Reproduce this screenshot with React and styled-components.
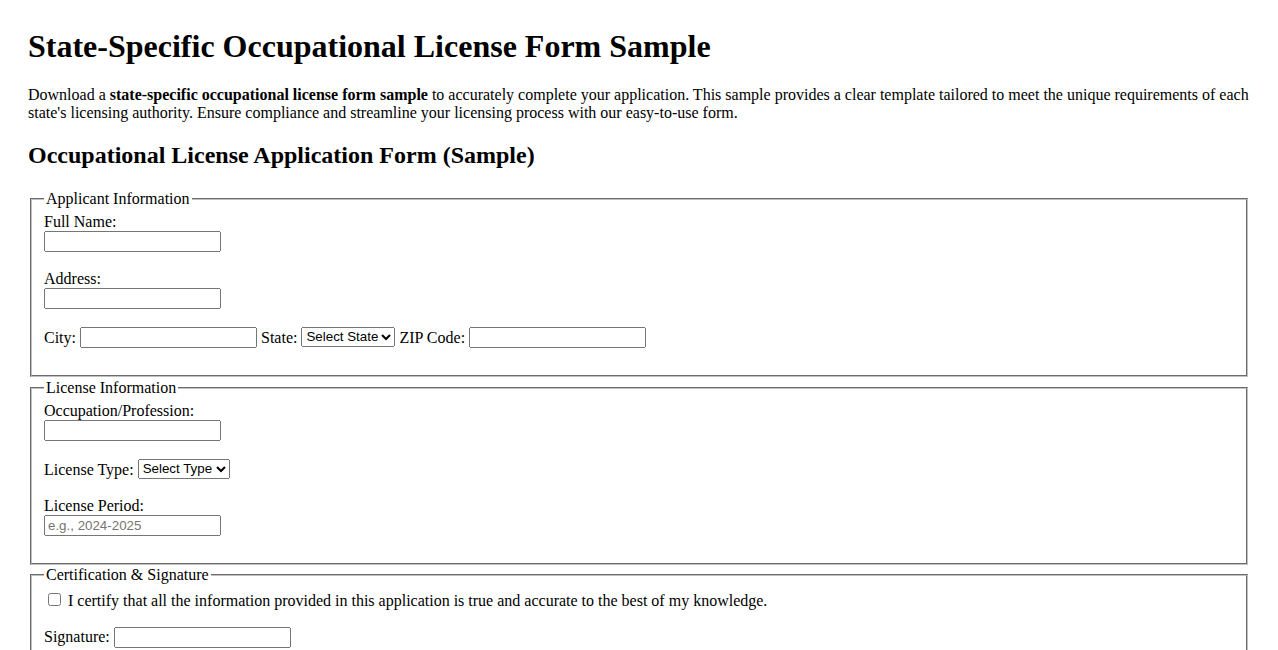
import React from "react";
import styled, { createGlobalStyle } from "styled-components";

const Global = createGlobalStyle`
  body {
    margin: 28px;
    font-family: "Liberation Serif", "Times New Roman", serif;
    font-size: 16px;
    color: #000;
    background: #fff;
  }
`;

const Title = styled.h1`
  font-size: 32px;
  font-weight: bold;
  margin: 0 0 21.44px;
`;

const Intro = styled.p`
  margin: 16px 0;
  line-height: normal;
`;

const SubTitle = styled.h2`
  font-size: 24px;
  font-weight: bold;
  margin: 19.92px 0 20.5px;
`;

const Fieldset = styled.fieldset`
  margin: 0 2px 1.5px;
  padding: 5.6px 12px 9.5px;
  border: 2px groove rgb(192, 192, 192);
`;

const Legend = styled.legend`
  padding: 0 2px;
`;

const Field = styled.div`
  margin-bottom: 17.6px;
`;

const Label = styled.label`
  display: ${(p) => (p.$block ? "block" : "inline")};
`;

const TextInput = styled.input`
  box-sizing: border-box;
  width: 177px;
  font-family: "Liberation Sans", Arial, sans-serif;
  font-size: 13.333px;
`;

const Select = styled.select`
  height: 20px;
  font-family: "Liberation Sans", Arial, sans-serif;
  font-size: 13.333px;
  vertical-align: 1px;
`;

const Check = styled.input`
  margin: 3px 3px 3px 4px;
`;

const SubmitButton = styled.button`
  font-family: "Liberation Sans", Arial, sans-serif;
  font-size: 13.333px;
`;

export default function App() {
  return (
    <>
      <Global />
      <Title>State-Specific Occupational License Form Sample</Title>
      <Intro>
        Download a <strong>state-specific occupational license form sample</strong> to accurately
        complete your application. This sample provides a clear template tailored to meet the
        unique requirements of each state's licensing authority. Ensure compliance and streamline
        your licensing process with our easy-to-use form.
      </Intro>
      <SubTitle>Occupational License Application Form (Sample)</SubTitle>
      <form onSubmit={(e) => e.preventDefault()}>
        <Fieldset>
          <Legend>Applicant Information</Legend>
          <Field>
            <Label $block htmlFor="fullName">Full Name:</Label>
            <TextInput id="fullName" type="text" />
          </Field>
          <Field>
            <Label $block htmlFor="address">Address:</Label>
            <TextInput id="address" type="text" />
          </Field>
          <Field>
            <Label htmlFor="city">City:</Label> <TextInput id="city" type="text" />{" "}
            <Label htmlFor="state">State:</Label>{" "}
            <Select id="state" defaultValue="">
              <option value="">Select State</option>
              <option>California</option>
              <option>New York</option>
              <option>Texas</option>
            </Select>{" "}
            <Label htmlFor="zip">ZIP Code:</Label> <TextInput id="zip" type="text" />
          </Field>
        </Fieldset>
        <Fieldset>
          <Legend>License Information</Legend>
          <Field>
            <Label $block htmlFor="occupation">Occupation/Profession:</Label>
            <TextInput id="occupation" type="text" />
          </Field>
          <Field>
            <Label htmlFor="licenseType">License Type:</Label>{" "}
            <Select id="licenseType" defaultValue="">
              <option value="">Select Type</option>
              <option>New</option>
              <option>Renewal</option>
            </Select>
          </Field>
          <Field>
            <Label $block htmlFor="period">License Period:</Label>
            <TextInput id="period" type="text" placeholder="e.g., 2024-2025" />
          </Field>
        </Fieldset>
        <Fieldset>
          <Legend>Certification &amp; Signature</Legend>
          <Field>
            <Check type="checkbox" id="certify" />{" "}
            <Label htmlFor="certify">
              I certify that all the information provided in this application is true and accurate
              to the best of my knowledge.
            </Label>
          </Field>
          <Field>
            <Label htmlFor="signature">Signature:</Label> <TextInput id="signature" type="text" />
          </Field>
          <Field>
            <Label htmlFor="date">Date:</Label> <TextInput id="date" type="text" />
          </Field>
        </Fieldset>
        <Field>
          <SubmitButton type="submit">Submit Application</SubmitButton>
        </Field>
      </form>
    </>
  );
}
